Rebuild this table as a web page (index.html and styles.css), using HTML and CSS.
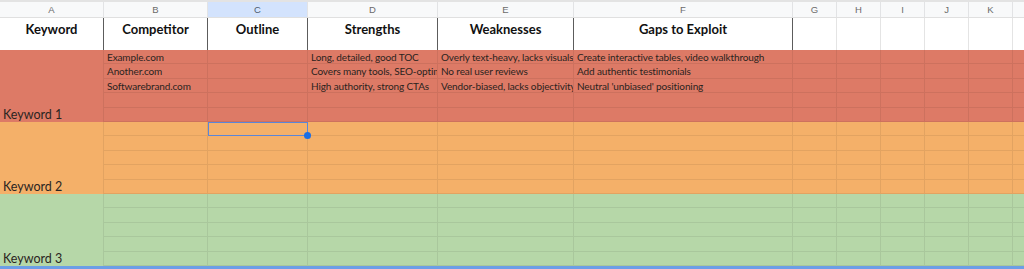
FILE: index.html
```html
<!DOCTYPE html>
<html>
<head>
<meta charset="utf-8">
<link rel="stylesheet" href="styles.css">
</head>
<body>
<div class="sheet">
  <div class="letters">
    <div class="lt">A</div>
    <div class="lt">B</div>
    <div class="lt sel">C</div>
    <div class="lt">D</div>
    <div class="lt">E</div>
    <div class="lt">F</div>
    <div class="lt">G</div>
    <div class="lt">H</div>
    <div class="lt">I</div>
    <div class="lt">J</div>
    <div class="lt">K</div>
    <div class="lt last"></div>
  </div>
  <div class="titles">
    <div class="tt main">Keyword</div>
    <div class="tt main">Competitor</div>
    <div class="tt main">Outline</div>
    <div class="tt main">Strengths</div>
    <div class="tt main">Weaknesses</div>
    <div class="tt main">Gaps to Exploit</div>
    <div class="tt"></div>
    <div class="tt"></div>
    <div class="tt"></div>
    <div class="tt"></div>
    <div class="tt"></div>
    <div class="tt last"></div>
  </div>

  <div class="band red">
    <div class="kw">Keyword 1</div>
    <div class="c">Example.com</div><div class="c"></div><div class="c">Long, detailed, good TOC</div><div class="c">Overly text-heavy, lacks visuals</div><div class="c">Create interactive tables, video walkthrough</div><div class="c"></div><div class="c"></div><div class="c"></div><div class="c"></div><div class="c"></div><div class="c last"></div>
    <div class="c">Another.com</div><div class="c"></div><div class="c">Covers many tools, SEO-optimized</div><div class="c">No real user reviews</div><div class="c">Add authentic testimonials</div><div class="c"></div><div class="c"></div><div class="c"></div><div class="c"></div><div class="c"></div><div class="c last"></div>
    <div class="c">Softwarebrand.com</div><div class="c"></div><div class="c">High authority, strong CTAs</div><div class="c">Vendor-biased, lacks objectivity</div><div class="c">Neutral 'unbiased' positioning</div><div class="c"></div><div class="c"></div><div class="c"></div><div class="c"></div><div class="c"></div><div class="c last"></div>
    <div class="c"></div><div class="c"></div><div class="c"></div><div class="c"></div><div class="c"></div><div class="c"></div><div class="c"></div><div class="c"></div><div class="c"></div><div class="c"></div><div class="c last"></div>
    <div class="c"></div><div class="c"></div><div class="c"></div><div class="c"></div><div class="c"></div><div class="c"></div><div class="c"></div><div class="c"></div><div class="c"></div><div class="c"></div><div class="c last"></div>
  </div>

  <div class="band orange">
    <div class="kw">Keyword 2</div>
    <div class="c"></div><div class="c active"></div><div class="c"></div><div class="c"></div><div class="c"></div><div class="c"></div><div class="c"></div><div class="c"></div><div class="c"></div><div class="c"></div><div class="c last"></div>
    <div class="c"></div><div class="c"></div><div class="c"></div><div class="c"></div><div class="c"></div><div class="c"></div><div class="c"></div><div class="c"></div><div class="c"></div><div class="c"></div><div class="c last"></div>
    <div class="c"></div><div class="c"></div><div class="c"></div><div class="c"></div><div class="c"></div><div class="c"></div><div class="c"></div><div class="c"></div><div class="c"></div><div class="c"></div><div class="c last"></div>
    <div class="c"></div><div class="c"></div><div class="c"></div><div class="c"></div><div class="c"></div><div class="c"></div><div class="c"></div><div class="c"></div><div class="c"></div><div class="c"></div><div class="c last"></div>
    <div class="c"></div><div class="c"></div><div class="c"></div><div class="c"></div><div class="c"></div><div class="c"></div><div class="c"></div><div class="c"></div><div class="c"></div><div class="c"></div><div class="c last"></div>
  </div>

  <div class="band green">
    <div class="kw">Keyword 3</div>
    <div class="c"></div><div class="c"></div><div class="c"></div><div class="c"></div><div class="c"></div><div class="c"></div><div class="c"></div><div class="c"></div><div class="c"></div><div class="c"></div><div class="c last"></div>
    <div class="c"></div><div class="c"></div><div class="c"></div><div class="c"></div><div class="c"></div><div class="c"></div><div class="c"></div><div class="c"></div><div class="c"></div><div class="c"></div><div class="c last"></div>
    <div class="c"></div><div class="c"></div><div class="c"></div><div class="c"></div><div class="c"></div><div class="c"></div><div class="c"></div><div class="c"></div><div class="c"></div><div class="c"></div><div class="c last"></div>
    <div class="c"></div><div class="c"></div><div class="c"></div><div class="c"></div><div class="c"></div><div class="c"></div><div class="c"></div><div class="c"></div><div class="c"></div><div class="c"></div><div class="c last"></div>
    <div class="c"></div><div class="c"></div><div class="c"></div><div class="c"></div><div class="c"></div><div class="c"></div><div class="c"></div><div class="c"></div><div class="c"></div><div class="c"></div><div class="c last"></div>
  </div>
  <div class="bottombar"></div>
</div>
</body>
</html>
```

FILE: styles.css
```css
* { box-sizing: border-box; }
html, body { margin: 0; padding: 0; background: #ffffff; overflow: hidden; }
body { width: 1024px; height: 269px; font-family: Lato, "Open Sans", sans-serif; }

.sheet { width: 1024px; }

.letters, .titles, .band {
  display: grid;
  grid-template-columns: 104px 104px 100px 130px 136px 219px 44px 44px 44px 44px 44px 11px;
}

.letters {
  height: 18px;
  background: #f8f9fa;
  border-top: 2px solid #e3e3e3;
  border-bottom: 1px solid #e0e0e0;
}
.lt {
  font-family: "Liberation Sans", Arial, sans-serif;
  font-size: 9.5px;
  color: #6b6b6b;
  text-align: center;
  line-height: 15px;
  border-right: 1px solid #e2e3e5;
}
.lt.sel { background: #d3e3fd; color: #4d5a6e; }
.lt.last { border-right: none; }

.titles { height: 32px; background: #fff; }
.tt {
  border-right: 1px solid #e4e4e4;
  font-size: 13px;
  font-weight: 700;
  color: #111;
  text-align: center;
  padding-top: 3px;
  line-height: 16px;
}
.tt.main { border-right: 1px solid #5c5c5c; }
.tt.last { border-right: none; }

.band {
  height: 72px;
  grid-template-rows: repeat(5, 1fr);
}
.red { background: #dd7a66; }
.orange { background: #f4b069; }
.green { background: #b6d7a8; }

.kw {
  grid-row: 1 / span 5;
  border-right: 1px solid rgba(0,0,0,0.07);
  display: flex;
  align-items: flex-end;
  font-size: 12.5px;
  color: #2b2522;
  padding: 0 0 0 3px;
  line-height: 14px;
}

.c {
  border-right: 1px solid rgba(0,0,0,0.07);
  border-bottom: 1px solid rgba(0,0,0,0.07);
  font-size: 10px;
  letter-spacing: -0.12px;
  color: #2a2320;
  white-space: nowrap;
  overflow: hidden;
  padding: 1px 0 0 3px;
  line-height: 13px;
}
.c.last { border-right: none; }

.c.active { position: relative; overflow: visible; }
.c.active::before {
  content: "";
  position: absolute;
  left: 0; top: 0; right: -1px; bottom: -1px;
  border: 1.5px solid #5b86d8;
}
.c.active::after {
  content: "";
  position: absolute;
  right: -4px; bottom: -4px;
  width: 7px; height: 7px;
  border-radius: 50%;
  background: #1a6ee6;
}

.bottombar { height: 3px; background: #6c9ee6; }
```
